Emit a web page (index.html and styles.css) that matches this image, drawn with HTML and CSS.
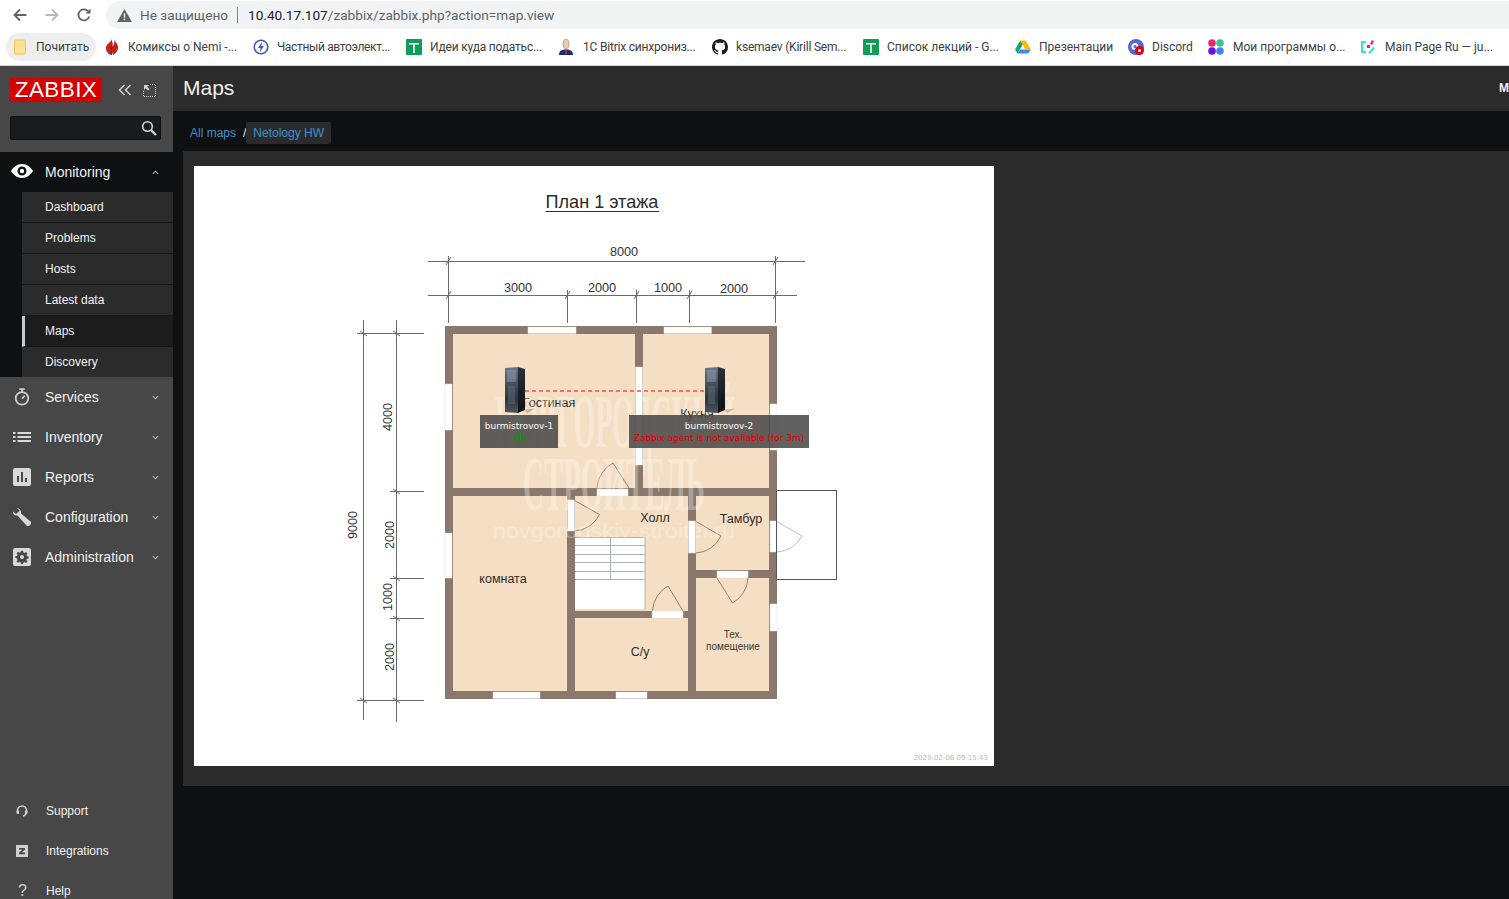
FILE: index.html
```html
<!DOCTYPE html>
<html lang="en">
<head>
<meta charset="utf-8">
<title>Maps</title>
<link rel="stylesheet" href="styles.css">
</head>
<body>
<header class="chrome">
  <div class="toolbar">
    <svg class="tb-btn" viewBox="0 0 16 16"><path class="tb-stroke" d="M14.5 8H2.5M8 2.5 2.5 8 8 13.5"/></svg>
    <svg class="tb-btn tb-off" viewBox="0 0 16 16"><path class="tb-stroke" d="M1.5 8h12M8 2.5 13.5 8 8 13.5"/></svg>
    <svg class="tb-btn" viewBox="0 0 16 16"><path class="tb-stroke" d="M13.2 9.5A5.5 5.5 0 1 1 12 4.2"/><path class="tb-fill" d="M14.5 1.5v5h-5z"/></svg>
    <div class="omnibox">
      <svg class="warn" viewBox="0 0 16 14"><path class="warn-tri" d="M8 0 16 14H0z"/><path class="warn-mark" d="M7.2 4.5h1.6v5H7.2zM7.2 10.5h1.6v1.6H7.2z"/></svg>
      <span class="insecure">Не защищено</span>
      <span class="omni-sep"></span>
      <span class="url"><span class="url-host">10.40.17.107</span>/zabbix/zabbix.php?action=map.view</span>
    </div>
  </div>
  <div class="bookmarks">
    <a class="bm bm-chip"><svg class="bm-ico" viewBox="0 0 16 16"><rect class="i-folder" x="2.5" y="1" width="11" height="14" rx="1"/></svg><span>Почитать</span></a>
    <a class="bm bm-nudge2"><svg class="bm-ico" viewBox="0 0 16 16"><path class="i-red" d="M7 0C8 3 3 4 2 8c-.6 3 1.5 6.5 4.5 8 .5-2 .5-5 0-7C8 11 8 14 9 16c3-1.500 5.500-5 5-8.500C13.500 5 11.500 3 10.500 1 10.500 3.500 10 6 8.500 7.500 9 5 8.500 2 7 0z"/><path class="i-dark" d="M7 6.500c.7 3 1 6 .8 9.500l-1.500-.3C6.700 12 6.700 9 7 6.500z"/></svg><span>Комиксы о Nemi -...</span></a>
    <a class="bm bm-nudge1 bm-tighter"><svg class="bm-ico" viewBox="0 0 16 16"><circle class="i-ring" cx="8" cy="8" r="6.800"/><path class="i-blue" d="M9 3 5 9h2.500L7 13l4-6H8.500z"/></svg><span>Частный автоэлект...</span></a>
    <a class="bm bm-tight"><svg class="bm-ico" viewBox="0 0 16 16"><rect class="i-green" x="0" y="0" width="16" height="16" rx="1"/><path class="i-white" d="M3 4h10v1.500H8.800V14H7.200V5.500H3z"/></svg><span>Идеи куда податьс...</span></a>
    <a class="bm bm-wide bm-tight"><svg class="bm-ico" viewBox="0 0 16 16"><path class="i-navy" d="M1 16c0-4 2.500-5.500 7-5.500s7 1.500 7 5.500z"/><ellipse class="i-skin" cx="8" cy="5" rx="3" ry="5"/><path class="i-red" d="M7.300 11h1.400l.5 3.500-1.200 1-1.200-1z"/></svg><span>1C Bitrix синхрониз...</span></a>
    <a class="bm bm-tight"><svg class="bm-ico" viewBox="0 0 16 16"><path class="i-black" d="M8 0C3.580 0 0 3.580 0 8c0 3.540 2.290 6.530 5.470 7.590.4.070.550-.170.550-.380 0-.190-.010-.820-.010-1.490-2.010.370-2.530-.490-2.690-.940-.090-.230-.480-.940-.820-1.130-.280-.150-.680-.520-.010-.530.630-.010 1.080.580 1.230.820.720 1.210 1.870.870 2.330.660.070-.520.280-.870.510-1.070-1.780-.2-3.640-.890-3.640-3.950 0-.870.310-1.590.820-2.150-.080-.2-.360-1.020.080-2.120 0 0 .670-.210 2.200.820.640-.180 1.320-.270 2-.270.680 0 1.360.090 2 .270 1.530-1.040 2.200-.820 2.200-.820.440 1.100.160 1.920.080 2.120.510.560.820 1.270.820 2.150 0 3.070-1.870 3.750-3.650 3.950.290.250.540.730.540 1.480 0 1.070-.010 1.930-.010 2.200 0 .210.150.460.550.380A8.013 8.013 0 0 0 16 8c0-4.420-3.580-8-8-8z"/></svg><span>ksemaev (Kirill Sem...</span></a>
    <a class="bm"><svg class="bm-ico" viewBox="0 0 16 16"><rect class="i-green" x="0" y="0" width="16" height="16" rx="1"/><path class="i-white" d="M3 4h10v1.500H8.800V14H7.200V5.500H3z"/></svg><span>Список лекций - G...</span></a>
    <a class="bm"><svg class="bm-ico" viewBox="0 0 16 16"><path class="i-dgreen" d="M5.300 1.500 0 10.500l2.500 4 5.300-9z"/><path class="i-dblue" d="M2.500 14.500h10.700l2.700-4H5.200z"/><path class="i-dyellow" d="M5.300 1.500h5.400l5.200 9h-5.300z"/></svg><span>Презентации</span></a>
    <a class="bm"><svg class="bm-ico" viewBox="0 0 16 16"><circle class="i-discord" cx="8" cy="8" r="8"/><circle class="i-white" cx="7" cy="7.500" r="3.500"/><circle class="i-discord" cx="7" cy="7.500" r="1.500"/><circle class="i-badge" cx="11.500" cy="11.500" r="4.500"/><circle class="i-white" cx="11.500" cy="11.500" r="1.500"/></svg><span>Discord</span></a>
    <a class="bm bm-wide"><svg class="bm-ico" viewBox="0 0 16 16"><circle class="i-pink" cx="4" cy="4" r="3.800"/><circle class="i-teal" cx="12" cy="4" r="3.800"/><circle class="i-purple" cx="4" cy="12" r="3.800"/><circle class="i-dblue" cx="12" cy="12" r="3.800"/></svg><span>Мои программы о...</span></a>
    <a class="bm bm-wide"><svg class="bm-ico" viewBox="0 0 16 16"><path class="i-cyan" d="M1 2h5v2H3v8h3v2H1zM13 8l2 1-5 6-2-1z"/><path class="i-pink" d="M7 6h3v3H7zM12 1l2 1-2 4-2-1z"/></svg><span>Main Page Ru — ju...</span></a>
  </div>
</header>

<div class="app">
  <aside class="sidebar">
    <div class="brand">
      <span class="logo">ZABBIX</span>
      <svg class="brand-ico" viewBox="0 0 14 12"><path class="brand-stroke" d="M6.500 1 1.500 6l5 5M12.500 1l-5 5 5 5"/></svg>
      <svg class="brand-ico brand-ico-2" viewBox="0 0 13 13"><path class="brand-dots" d="M7 .5h5.500V12.500H.5V7"/><path class="brand-fill" d="M1 1h5L4.300 2.700 6.500 5 5 6.500 2.700 4.300 1 6z"/></svg>
    </div>
    <div class="search">
      <svg class="search-ico" viewBox="0 0 16 16"><circle class="search-stroke" cx="6.500" cy="6.500" r="4.800"/><path class="search-handle" d="m10 10 5 5"/></svg>
    </div>
    <nav class="menu">
      <section class="menu-open">
        <div class="item item-open">
          <svg class="item-ico ico-eye" viewBox="0 0 22 14"><path class="ico-fill" fill-rule="evenodd" d="M11 0c5 0 9 3.500 11 7-2 3.500-6 7-11 7S2 10.500 0 7c2-3.500 6-7 11-7zm0 2.500a4.500 4.500 0 1 0 0 9 4.500 4.500 0 0 0 0-9zm0 2.300a2.200 2.200 0 1 1 0 4.400 2.200 2.200 0 0 1 0-4.400z"/></svg>
          <span>Monitoring</span>
          <svg class="chev" viewBox="0 0 8 5"><path class="chev-path" d="M1 4 4 1l3 3"/></svg>
        </div>
        <ul class="submenu">
          <li>Dashboard</li>
          <li>Problems</li>
          <li>Hosts</li>
          <li>Latest data</li>
          <li class="selected">Maps</li>
          <li>Discovery</li>
        </ul>
      </section>
      <div class="item">
        <svg class="item-ico" viewBox="0 0 18 20"><circle class="ico-line" cx="9" cy="11.500" r="7"/><path class="ico-line" d="M6 1.200h6M9 1.500v3"/><path class="ico-line" d="M9 12 12 8.500"/></svg>
        <span>Services</span>
        <svg class="chev" viewBox="0 0 8 5"><path class="chev-path" d="M1 1l3 3 3-3"/></svg>
      </div>
      <div class="item">
        <svg class="item-ico" viewBox="0 0 18 12"><path class="ico-fill" d="M0 1h2.500v2H0zM4.500 1H18v2H4.500zM0 5h2.500v2H0zM4.500 5H18v2H4.500zM0 9h2.500v2H0zM4.500 9H18v2H4.500z"/></svg>
        <span>Inventory</span>
        <svg class="chev" viewBox="0 0 8 5"><path class="chev-path" d="M1 1l3 3 3-3"/></svg>
      </div>
      <div class="item">
        <svg class="item-ico" viewBox="0 0 18 18"><rect class="ico-fill" width="18" height="18" rx="2"/><path class="ico-dark" d="M4 8h2v6H4zM8 4h2v10H8zM12 10h2v4h-2z"/></svg>
        <span>Reports</span>
        <svg class="chev" viewBox="0 0 8 5"><path class="chev-path" d="M1 1l3 3 3-3"/></svg>
      </div>
      <div class="item">
        <svg class="item-ico" viewBox="0 0 18 18"><path class="ico-fill" d="M4 0 6.800 2.800 3 6 0 3.500C-.3 6 1.500 8 4.500 7.500L13.500 17.500a2 2 0 0 0 3-.1l1-1a2 2 0 0 0 0-2.900L8 5.500C8.500 3 7 .2 4 0z"/></svg>
        <span>Configuration</span>
        <svg class="chev" viewBox="0 0 8 5"><path class="chev-path" d="M1 1l3 3 3-3"/></svg>
      </div>
      <div class="item">
        <svg class="item-ico" viewBox="0 0 18 18"><rect class="ico-fill" width="18" height="18" rx="2"/><path class="ico-dark" fill-rule="evenodd" d="M8 3h2l.3 1.700 1.300.6L13 4.300l1.400 1.400-1 1.400.6 1.300 1.700.3v2l-1.700.3-.6 1.300 1 1.400-1.400 1.400-1.400-1-1.300.6L10 16.200H8l-.3-1.700-1.300-.6-1.400 1-1.400-1.400 1-1.400-.6-1.300L2.300 10V8.400l1.700-.3.600-1.300-1-1.400 1.400-1.400 1.400 1 1.300-.6zM9 7.200a2 2 0 1 0 0 4 2 2 0 0 0 0-4z" transform="translate(0 -.2)"/></svg>
        <span>Administration</span>
        <svg class="chev" viewBox="0 0 8 5"><path class="chev-path" d="M1 1l3 3 3-3"/></svg>
      </div>
    </nav>
    <nav class="menu-bottom">
      <div class="foot">
        <svg class="foot-ico" viewBox="0 0 12 12"><path class="foot-line" d="M1.500 7V5.500a4.500 4.500 0 0 1 9 0V7M10 8c-.3 2-1.500 2.800-3 3"/><rect class="foot-fill" x=".5" y="5.500" width="2.600" height="3.500" rx="1"/><rect class="foot-fill" x="8.900" y="5.500" width="2.600" height="3.500" rx="1"/></svg>
        <span>Support</span>
      </div>
      <div class="foot">
        <svg class="foot-ico" viewBox="0 0 12 12"><path class="foot-fill" fill-rule="evenodd" d="M0 0h12v12H0zM3 3v1.600h3.500L3 7.800v1.400h6V7.600H5.600L9 4.400V3z"/></svg>
        <span>Integrations</span>
      </div>
      <div class="foot">
        <span class="foot-q">?</span>
        <span>Help</span>
      </div>
    </nav>
  </aside>

  <main class="main">
    <div class="page-head">
      <h1 class="page-title">Maps</h1>
      <span class="page-cut">M</span>
    </div>
    <div class="crumbs">
      <a class="crumb">All maps</a>
      <span class="crumb-sep">/</span>
      <a class="crumb crumb-current">Netology HW</a>
    </div>
    <div class="content">
      <svg class="map" viewBox="194 166 800 600" xmlns="http://www.w3.org/2000/svg">
        <defs>
          <linearGradient id="srvFront" x1="0" y1="0" x2="0" y2="1">
            <stop offset="0" stop-color="#6a7a8a"/>
            <stop offset=".35" stop-color="#46525f"/>
            <stop offset=".7" stop-color="#2a343e"/>
            <stop offset="1" stop-color="#4b5762"/>
          </linearGradient>
          <linearGradient id="srvSide" x1="0" y1="0" x2="0" y2="1">
            <stop offset="0" stop-color="#2a3138"/>
            <stop offset="1" stop-color="#0c1014"/>
          </linearGradient>
          <symbol id="server" viewBox="0 0 30 48" width="30" height="48">
            <path class="srv-shadow" d="M20 43 30 41.500 22 46z"/>
            <path fill="url(#srvFront)" d="M0 1 13 0V46L0 45z"/>
            <path fill="url(#srvSide)" d="M13 0 20 2V43L13 46z"/>
            <path class="srv-vent" d="M2 4h9M2 6h9M2 8h9M2 10h9M2 12h9M2 14h9"/>
            <path class="srv-grid" d="M3 20h7M3 22h7M3 24h7M3 26h7M3 28h7M3 30h7M3 32h7M3 34h7M3 36h7"/>
          </symbol>
        </defs>

        <text class="t-title" x="602" y="208">План 1 этажа</text>
        <path class="title-rule" d="M545.500 211.500H659"/>

        <g class="dims">
          <path d="M428 261.500H805M428 295.500H797"/>
          <path d="M448.500 256V323M775.500 256V323M567.500 290V323M636.500 290V323M689.500 290V323"/>
          <path d="M446 265 451 257M446 299 451 291M565 299 570 291M634 299 639 291M687 299 692 291M773 265 778 257M773 299 778 291"/>
          <path d="M363.500 320V720M396.500 320V722"/>
          <path d="M357 333.500H424M390 491.500H424M357 700.500H424M390 578.500H424M390 618.500H424"/>
          <path d="M360 331 367 336M393 331 400 336M393 489 400 494M393 576 400 581M393 616 400 621M360 698 367 703M393 698 400 703"/>
        </g>
        <g class="t-dim">
          <text x="624" y="256">8000</text>
          <text x="518" y="292">3000</text>
          <text x="602" y="292">2000</text>
          <text x="668" y="292">1000</text>
          <text x="734" y="293">2000</text>
          <text transform="translate(357 525) rotate(-90)">9000</text>
          <text transform="translate(392 417) rotate(-90)">4000</text>
          <text transform="translate(394 535) rotate(-90)">2000</text>
          <text transform="translate(392 597) rotate(-90)">1000</text>
          <text transform="translate(394 657) rotate(-90)">2000</text>
        </g>

        <rect class="wall" x="445" y="326" width="332" height="373"/>
        <g class="room">
          <rect x="453" y="334" width="182" height="154"/>
          <rect x="643" y="334" width="126" height="154"/>
          <rect x="453" y="496" width="114" height="195"/>
          <path d="M575 496H688V611H575z"/>
          <rect x="575" y="618" width="113" height="73"/>
          <rect x="696" y="496" width="73" height="74"/>
          <rect x="696" y="578" width="73" height="113"/>
        </g>
        <g class="window">
          <rect x="528" y="327" width="48" height="6.500"/>
          <rect x="664" y="327" width="47.500" height="6.500"/>
          <rect x="445" y="384" width="7" height="46"/>
          <rect x="445" y="533" width="7" height="45"/>
          <rect x="770" y="404" width="7" height="46"/>
          <rect x="770" y="521" width="7" height="31"/>
          <rect x="770" y="604" width="7" height="27"/>
          <rect x="635.500" y="367" width="7" height="98"/>
          <rect x="597" y="489" width="31" height="7"/>
          <rect x="567.500" y="500" width="7" height="31"/>
          <rect x="688.500" y="521" width="7" height="32"/>
          <rect x="717" y="571" width="31" height="7"/>
          <rect x="652" y="611" width="31" height="7"/>
          <rect x="493" y="692" width="47" height="6.500"/>
          <rect x="616" y="692" width="31" height="6.500"/>
        </g>

        <rect class="stair-bg" x="575" y="537" width="70" height="72"/>
        <path class="stair" d="M575 537.500H645M575 545.500H645M575 554.500H645M575 562.500H645M575 571.500H645M575 579.500H645M610.500 537V579M645 537V609"/>

        <g class="door">
          <path d="M574.500 500.500 599.500 514.500A29 29 0 0 1 574.500 531"/>
          <path d="M696 521.500 721 536A29 29 0 0 1 696 553"/>
          <path d="M717 578 732.500 603A30 30 0 0 0 748 578"/>
          <path d="M683 611 668 586A30 30 0 0 0 652.500 611"/>
          <path d="M629 488 613 463A30 30 0 0 0 597 488"/>
          <path class="door-light" d="M777 521.500 802 536A29 29 0 0 1 777 552"/>
        </g>
        <rect class="porch" x="776.500" y="490.500" width="60" height="89"/>

        <g class="t-room">
          <text x="549" y="407">Гостиная</text>
          <text x="697" y="418">Кухня</text>
          <text x="655" y="522">Холл</text>
          <text x="741" y="523">Тамбур</text>
          <text x="503" y="583">комната</text>
          <text x="640" y="656">С/у</text>
        </g>
        <g class="t-small">
          <text x="733" y="638">Тех.</text>
          <text x="733" y="650">помещение</text>
        </g>

        <g class="watermark">
          <text x="495" y="447" textLength="240" lengthAdjust="spacingAndGlyphs">НОВГОРОДСКИЙ</text>
          <text class="wm-2" x="523" y="510" textLength="182" lengthAdjust="spacingAndGlyphs">СТРОИТЕЛЬ</text>
          <text class="wm-3" x="493" y="538" textLength="242" lengthAdjust="spacingAndGlyphs">novgorodskiy-stroitel.ru</text>
        </g>

        <path class="link" d="M525 391H705"/>
        <use href="#server" x="505" y="367"/>
        <use href="#server" x="705" y="367"/>

        <rect class="label-bg" x="480" y="415" width="78" height="33"/>
        <rect class="label-bg" x="629" y="415" width="180" height="33"/>
        <g class="t-label">
          <text x="519" y="429">burmistrovov-1</text>
          <text class="t-ok" x="519" y="441">OK</text>
          <text x="719" y="429">burmistrovov-2</text>
          <text class="t-bad" x="719" y="441">Zabbix agent is not available (for 3m)</text>
        </g>
        <text class="t-time" x="988" y="760">2023-02-06 09:15:43</text>
      </svg>
    </div>
  </main>
</div>
</body>
</html>
```
FILE: styles.css
```css
* { box-sizing: border-box; }
html, body { margin: 0; height: 899px; overflow: hidden; background: #0e1012; }
body { font-family: "Liberation Sans", Arial, sans-serif; }
ul { margin: 0; padding: 0; list-style: none; }

/* browser chrome */
.chrome { height: 66px; background: #fff; border-bottom: 1px solid #d6d7d9; font-family: Roboto, "Noto Sans", sans-serif; }
.toolbar { height: 29px; padding-top: 1px; display: flex; align-items: center; }
.tb-btn { width: 16px; height: 16px; margin-left: 12px; flex: none; margin-right: 4px; }
.tb-stroke { fill: none; stroke: #5f6368; stroke-width: 1.8; }
.tb-fill { fill: #5f6368; }
.tb-off .tb-stroke { stroke: #b4b7bb; }
.omnibox { flex: 1; height: 28px; margin-left: 10px; background: #f1f3f4; border-radius: 14px 0 0 14px; display: flex; align-items: center; padding-left: 11px; font-size: 13.650px; color: #5f6368; white-space: nowrap; }
.warn { width: 15px; height: 13px; flex: none; }
.warn-tri { fill: #5f6368; }
.warn-mark { fill: #f1f3f4; }
.insecure { margin-left: 8px; width: 89px; }
.omni-sep { width: 1px; height: 16px; background: #80868b; margin: 0 10px 0 8px; }
.url-host { color: #202124; }

.bookmarks { height: 36px; padding-left: 6px; display: grid; grid-template-columns: 100px 148px 152px 152px 154px 151px 152px 113px 80px 152px 1fr; align-items: center; font-size: 12px; color: #3c4043; }
.bm { display: flex; align-items: center; gap: 8px; white-space: nowrap; }
.bm-chip { width: 90px; height: 28px; padding-left: 6px; gap: 8px; background: #eeeeee; border-radius: 14px; }
.bm-nudge2 { margin-left: -2px; }
.bm-nudge1 { margin-left: -1px; }
.bm-wide { gap: 9px; }
.bm-tight { letter-spacing: -.2px; }
.bm-tighter { letter-spacing: -.35px; }
.bm-ico { width: 16px; height: 16px; flex: none; }
.i-folder { fill: #fde293; stroke: #e8c655; }
.i-red { fill: #c5221f; }
.i-dark { fill: #3a1414; }
.i-ring { fill: none; stroke: #3f5bc4; stroke-width: 1.6; }
.i-blue { fill: #3f5bc4; }
.i-green { fill: #0f9d58; }
.i-white { fill: #fff; }
.i-navy { fill: #1c2a78; }
.i-skin { fill: #e9cfa8; stroke: #7a6a50; stroke-width: .5; }
.i-black { fill: #1b1f23; }
.i-dgreen { fill: #1ea362; }
.i-dblue { fill: #4285f4; }
.i-dyellow { fill: #ffba00; }
.i-discord { fill: #5865d8; }
.i-badge { fill: #e00000; }
.i-pink { fill: #f0246e; }
.i-teal { fill: #3dc28f; }
.i-purple { fill: #6a11e8; }
.i-cyan { fill: #3fe0cf; }

/* app */
.app { display: flex; height: 833px; }
.sidebar { width: 173px; flex: none; background: #474747; overflow: hidden; color: #f2f2f2; }
.brand { height: 50px; padding: 12px 0 0 10px; display: flex; align-items: flex-start; }
.logo { width: 92px; height: 24px; background: #d40000; color: #fff; font-size: 22.5px; line-height: 24px; text-align: center; letter-spacing: .4px; }
.brand-ico { width: 14px; height: 12px; margin: 6px 0 0 16px; flex: none; }
.brand-ico-2 { width: 13px; height: 13px; margin-left: 11px; }
.brand-stroke { fill: none; stroke: #cfcfcf; stroke-width: 1.5; }
.brand-dots { fill: none; stroke: #cfcfcf; stroke-dasharray: 1 1; }
.brand-fill { fill: #cfcfcf; }
.search { height: 24px; width: 151px; margin-left: 10px; background: #191b1e; border: 1px solid #0e1012; border-radius: 2px; position: relative; }
.search-ico { width: 16px; height: 16px; position: absolute; right: 3px; top: 3px; }
.search-stroke { fill: none; stroke: #d6d6d6; stroke-width: 1.6; }
.search-handle { fill: none; stroke: #d6d6d6; stroke-width: 2.2; }

.menu { margin-top: 12px; font-size: 14px; }
.menu-open { background: #0e1012; }
.item { height: 40px; display: grid; grid-template-columns: 45px 1fr 21px; align-items: center; }
.item-ico { width: 18px; height: 18px; margin-left: 13px; }
.ico-eye { width: 22px; height: 14px; margin-left: 11px; margin-top: -2px; }
.ico-fill { fill: #d9d9d9; }
.ico-dark { fill: #474747; }
.ico-line { fill: none; stroke: #d0d0d0; stroke-width: 1.900; }
.item-open .ico-fill { fill: #fff; }
.chev { width: 7px; height: 5px; }
.chev-path { fill: none; stroke: #b5b5b5; stroke-width: 1.200; }
.submenu { margin-left: 22px; font-size: 12px; }
.submenu li { height: 31px; line-height: 30px; padding-left: 23px; background: #2b2b2b; border-bottom: 1px solid #151618; }
.submenu li:last-child { height: 30px; border-bottom: 0; }
.submenu li.selected { background: #1c1c1c; border-left: 3px solid #c8c8c8; padding-left: 20px; }

.menu-bottom { margin-top: 214px; font-size: 12px; }
.foot { height: 40px; display: grid; grid-template-columns: 46px 1fr; align-items: center; }
.foot-ico { width: 12px; height: 12px; margin-left: 16px; }
.foot-line { fill: none; stroke: #d0d0d0; stroke-width: 1.600; }
.foot-fill { fill: #d0d0d0; }
.foot-q { font-size: 16px; color: #d0d0d0; margin-left: 18px; }

.main { flex: 1; min-width: 0; overflow: hidden; background: #0e1012; }
.page-head { height: 45px; background: #2b2b2b; padding: 0 10px; display: flex; align-items: center; justify-content: space-between; color: #f2f2f2; }
.page-title { margin: -1px 0 0; font-size: 21px; font-weight: 400; }
.page-cut { font-size: 12px; font-weight: 700; margin: -2px -10px 0 0; width: 10px; overflow: hidden; }
.crumbs { height: 40px; padding: 4px 0 0 17px; display: flex; align-items: center; font-size: 12px; color: #3f90d0; }
.crumb-sep { color: #e8e8e8; margin: 0 0 0 7px; }
.crumb-current { margin-left: 0; padding: 0 7px; height: 22px; line-height: 22px; background: #2b2b2b; border-radius: 2px; }
.content { height: 635px; margin-left: 10px; padding: 15px 11px; background: #2b2b2b; }

/* map */
.map { display: block; width: 800px; height: 600px; background: #fff; }
.t-title { font-size: 18.100px; fill: #2b2b2b; text-anchor: middle; }
.title-rule { stroke: #333; stroke-width: 1; }
.dims path { fill: none; stroke: #6a6a6a; stroke-width: 1; }
.t-dim text { font-size: 12.700px; fill: #333; text-anchor: middle; }
.wall { fill: #8a786d; }
.room { fill: #f4dfc5; }
.window { fill: #fff; stroke: #ddd; stroke-width: .5; }
.stair-bg { fill: #fff; }
.stair { fill: none; stroke: #a9b2b2; stroke-width: 1; }
.door path { fill: none; stroke: #7a6a5c; stroke-width: .8; }
.door .door-light { stroke: #aeaeae; }
.porch { fill: none; stroke: #555; stroke-width: 1; }
.t-room text { font-size: 12.500px; fill: #2e2a26; text-anchor: middle; }
.t-small text { font-size: 10px; fill: #3c3732; text-anchor: middle; }
.watermark text { font-family: "Liberation Serif", serif; font-size: 76px; font-weight: 700; fill: #fff; opacity: .3; }
.watermark .wm-2 { font-size: 78px; }
.watermark .wm-3 { font-family: "Liberation Sans", sans-serif; font-size: 21px; font-weight: 400; opacity: .28; }
.link { fill: none; stroke: #f05050; stroke-width: 1.500; stroke-dasharray: 4 3; }
.srv-shadow { fill: #8c8478; opacity: .5; }
.srv-vent { fill: none; stroke: #8e9dad; stroke-width: 1; }
.srv-grid { fill: none; stroke: #6f7a87; stroke-width: .8; }
.label-bg { fill: #4a4a4a; opacity: .88; }
.t-label text { font-family: "DejaVu Sans", sans-serif; font-size: 9px; fill: #fff; text-anchor: middle; }
.t-label .t-ok { fill: #009900; }
.t-label .t-bad { fill: #e00000; }
.t-time { font-family: "DejaVu Sans", sans-serif; font-size: 7px; fill: #b8b8b8; text-anchor: end; }
```
